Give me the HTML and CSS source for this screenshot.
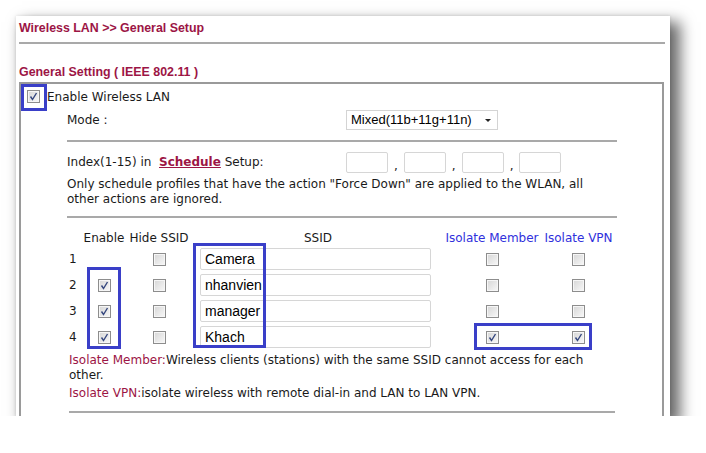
FILE: index.html
```html
<!DOCTYPE html>
<html lang="en">
<head>
    <meta charset="UTF-8">
    <title>Wireless LAN &gt;&gt; General Setup</title>
    <link rel="stylesheet" href="styles.css">
</head>
<body>

    <!-- Captura da página do roteador -->
    <div class="shot">
        <h1 class="title">Wireless LAN &gt;&gt; General Setup</h1>
        <div class="rule top-rule"></div>

        <h2 class="section-title">General Setting ( IEEE 802.11 )</h2>

        <div class="box">
            <div class="enable-row">
                <span class="cb on"><svg width="11" height="11" viewBox="0 0 11 11"><path d="M2.5 5.5 L4.5 8.5 L8.5 2" fill="none" stroke="#34467e" stroke-width="1.4"/></svg></span>
                <span>Enable Wireless LAN</span>
            </div>

            <div class="inner">
                <div class="field-row">
                    <span>Mode :</span>
                    <div class="select">Mixed(11b+11g+11n)</div>
                </div>

                <div class="rule"></div>

                <div class="field-row sched">
                    <span>Index(1-15) in &nbsp;<a href="#" class="link">Schedule</a> Setup:</span>
                    <div class="sched-inputs">
                        <span class="txt small"></span><span>,</span>
                        <span class="txt small"></span><span>,</span>
                        <span class="txt small"></span><span>,</span>
                        <span class="txt small"></span>
                    </div>
                </div>

                <p class="hint">Only schedule profiles that have the action "Force Down" are applied to the WLAN, all other actions are ignored.</p>

                <div class="rule"></div>

                <div class="ssid-table" id="ssidTable">
                    <span></span>
                    <span class="th">Enable</span>
                    <span class="th">Hide SSID</span>
                    <span class="th">SSID</span>
                    <span class="th blue">Isolate Member</span>
                    <span class="th blue">Isolate VPN</span>
                </div>

                <p class="note"><b>Isolate Member:</b>Wireless clients (stations) with the same SSID cannot access for each other.</p>
                <p class="note second"><b>Isolate VPN:</b>isolate wireless with remote dial-in and LAN to LAN VPN.</p>

                <div class="rule last"></div>
            </div>
        </div>

        <!-- Destaques azuis -->
        <div class="mark mark-wlan"></div>
        <div class="mark mark-enable"></div>
        <div class="mark mark-ssid"></div>
        <div class="mark mark-isolate"></div>
    </div>

    <script>
        // Linhas da tabela de SSID
        const rows = [
            { enable: false, hide: false, ssid: 'Camera', member: false, vpn: false },
            { enable: true, hide: false, ssid: 'nhanvien', member: false, vpn: false },
            { enable: true, hide: false, ssid: 'manager', member: false, vpn: false },
            { enable: true, hide: false, ssid: 'Khach', member: true, vpn: true }
        ];

        const check = '<svg width="11" height="11" viewBox="0 0 11 11"><path d="M2.5 5.5 L4.5 8.5 L8.5 2" fill="none" stroke="#34467e" stroke-width="1.4"/></svg>';

        function box(on) {
            return on ? `<span class="cb on">${check}</span>` : '<span class="cb"></span>';
        }

        let html = '';
        rows.forEach((r, i) => {
            html += `
                <span class="num">${i + 1}</span>
                <span class="cell">${i === 0 ? '' : box(r.enable)}</span>
                <span class="cell">${box(r.hide)}</span>
                <span class="cell left"><span class="txt ssid">${r.ssid}</span></span>
                <span class="cell">${box(r.member)}</span>
                <span class="cell">${box(r.vpn)}</span>
            `;
        });
        document.getElementById('ssidTable').insertAdjacentHTML('beforeend', html);
    </script>
</body>
</html>
```

FILE: styles.css
```css
body {
    margin: 0;
    background-color: #ffffff;
    font-family: "DejaVu Sans", Verdana, sans-serif;
    font-size: 12px;
    color: #1a1a1a;
}

.shot {
    position: relative;
    margin: 16px 0 0 16px;
    width: 654px;
    height: 400px;
    overflow: hidden;
    background-color: #ffffff;
    padding-left: 3px;
    box-sizing: border-box;
    box-shadow: 8px 8px 14px 2px rgba(0, 0, 0, 0.6), 0 0 3px rgba(0, 0, 0, 0.12);
}

.title {
    margin: 0;
    padding-top: 4px;
    line-height: 16px;
    font-family: "Liberation Sans", Arial, sans-serif;
    font-size: 12.4px;
    font-weight: bold;
    color: #9c1545;
}

.rule {
    height: 2px;
    background-color: #a9a9a9;
}

.top-rule {
    margin-top: 6px;
    width: 646px;
}

.section-title {
    margin: 20px 0 0 0;
    line-height: 16px;
    font-family: "Liberation Sans", Arial, sans-serif;
    font-size: 12.4px;
    font-weight: bold;
    color: #9c1545;
}

.box {
    margin-top: 2px;
    width: 645px;
    height: 400px;
    box-sizing: border-box;
    border: 2px solid #9a9a9a;
    border-bottom: none;
}

.enable-row {
    display: flex;
    align-items: center;
    gap: 7px;
    height: 25px;
    padding-left: 6px;
}

.inner {
    padding-left: 46px;
}

.field-row {
    display: grid;
    grid-template-columns: 279px auto;
    align-items: center;
    height: 22px;
}

.inner .rule {
    width: 550px;
    margin-top: 9px;
}

.sched {
    margin-top: 9px;
}

.sched-inputs {
    display: flex;
    align-items: flex-end;
    gap: 6px;
}

.link {
    color: #9c1545;
    font-weight: bold;
}

.select {
    position: relative;
    width: 152px;
    height: 20px;
    box-sizing: border-box;
    border: 1px solid #d4d4d4;
    padding-left: 4px;
    line-height: 18px;
    font-family: "Liberation Sans", Arial, sans-serif;
    font-size: 13px;
    color: #000;
}

.select::after {
    content: "";
    position: absolute;
    right: 6px;
    top: 8px;
    border-left: 3px solid transparent;
    border-right: 3px solid transparent;
    border-top: 3px solid #222;
}

.txt {
    display: inline-block;
    box-sizing: border-box;
    border: 1px solid #d6d6d6;
    border-radius: 2px;
    background-color: #fff;
}

.txt.small {
    width: 42px;
    height: 21px;
}

.txt.ssid {
    width: 231px;
    height: 22px;
    padding-left: 4px;
    line-height: 20px;
    font-family: "Liberation Sans", Arial, sans-serif;
    font-size: 14px;
    color: #000;
}

.hint {
    margin: 4px 0 0 0;
    line-height: 15px;
    width: 535px;
}

.ssid-table {
    margin-top: 11px;
    display: grid;
    grid-template-columns: 15px 44px 66px 252px 96px 77px;
    grid-auto-rows: 26px;
    grid-template-rows: 17px;
    align-items: center;
}

.th {
    text-align: center;
    white-space: nowrap;
    line-height: 16px;
}

.th.blue {
    color: #3030dc;
}

.num {
    padding-left: 2px;
}

.cell {
    display: flex;
    justify-content: center;
    align-items: center;
}

.cell.left {
    justify-content: flex-start;
    padding-left: 8px;
}

.cb {
    display: inline-flex;
    align-items: center;
    justify-content: center;
    width: 13px;
    height: 13px;
    box-sizing: border-box;
    border: 1px solid #8d8d8d;
    box-shadow: inset 0 0 0 1px #f6f6f6;
    background: linear-gradient(135deg, #d6d6d6, #f8f8f8);
}

.note {
    margin: 3px 0 0 2px;
    line-height: 15px;
    width: 535px;
}

.note.second {
    margin-top: 3px;
}

.note b {
    font-weight: normal;
    color: #9c1545;
}

.inner .rule.last {
    margin-top: 10px;
    margin-left: 2px;
    width: 546px;
}

/* Destaques */
.mark {
    position: absolute;
    border: 3px solid #3a3fc8;
    box-sizing: border-box;
}

.mark-wlan {
    left: 5px;
    top: 68px;
    width: 26px;
    height: 27px;
}

.mark-enable {
    left: 71px;
    top: 251px;
    width: 34px;
    height: 82px;
}

.mark-ssid {
    left: 177px;
    top: 227px;
    width: 73px;
    height: 105px;
}

.mark-isolate {
    left: 458px;
    top: 307px;
    width: 118px;
    height: 27px;
}
```
